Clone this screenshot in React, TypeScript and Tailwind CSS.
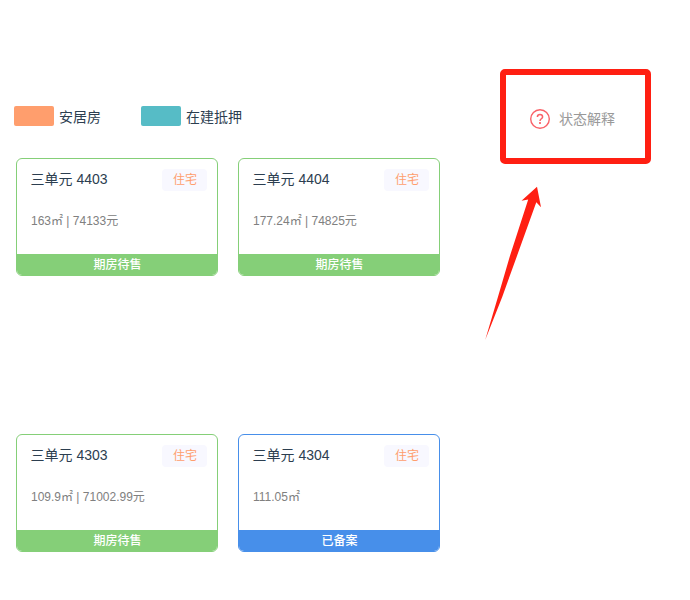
type Unit = {
  name: string;
  detail: string;
  status: string;
  tone: 'green' | 'blue';
};

const tones = {
  green: { border: 'border-[#85cf78]', bar: 'bg-[#85cf78]' },
  blue: { border: 'border-[#478fea]', bar: 'bg-[#478fea]' },
};

const floors: Unit[][] = [
  [
    { name: '三单元 4403', detail: '163㎡ | 74133元', status: '期房待售', tone: 'green' },
    { name: '三单元 4404', detail: '177.24㎡ | 74825元', status: '期房待售', tone: 'green' },
  ],
  [
    { name: '三单元 4303', detail: '109.9㎡ | 71002.99元', status: '期房待售', tone: 'green' },
    { name: '三单元 4304', detail: '111.05㎡', status: '已备案', tone: 'blue' },
  ],
];

function UnitCard({ unit }: { unit: Unit }) {
  const tone = tones[unit.tone];
  return (
    <article className={`flex h-[118px] w-[202px] flex-col overflow-hidden rounded-md border ${tone.border}`}>
      <div className="flex items-start justify-between pt-2.5 pr-2.5 pl-[13.5px]">
        <h3 className="text-sm leading-[21px] text-[#2c3e50]">{unit.name}</h3>
        <span className="h-[22px] w-[45px] rounded bg-[#f8f8ff] pl-px text-center text-xs leading-[23px] text-[#ff9e6d]">
          住宅
        </span>
      </div>
      <p className="mt-[21px] pl-3.5 text-xs leading-[18px] whitespace-nowrap text-[#808080]">{unit.detail}</p>
      <div className={`mt-auto h-[21px] pl-px text-center text-xs leading-[23px] font-medium text-white ${tone.bar}`}>
        {unit.status}
      </div>
    </article>
  );
}

function Legend({ color, label }: { color: string; label: string }) {
  return (
    <div className="flex h-5 items-center gap-[5px]">
      <span className={`h-5 w-10 rounded-xs ${color}`} />
      <span className="pt-0.5 text-sm leading-5 text-[#2c3e50]">{label}</span>
    </div>
  );
}

export default function App() {
  return (
    <main className="flex h-[600px] w-[690px] overflow-hidden bg-white font-['Liberation_Sans','Noto_Sans_CJK_SC',sans-serif]">
      <section className="w-[485px] pt-[106px]">
        <div className="flex gap-10 pl-3.5">
          <Legend color="bg-[#ff9e6d]" label="安居房" />
          <Legend color="bg-[#56bcc6]" label="在建抵押" />
        </div>
        <div className="mt-8 flex flex-col gap-[158px] pl-4">
          {floors.map((units) => (
            <div key={units[0].name} className="flex gap-5">
              {units.map((unit) => (
                <UnitCard key={unit.name} unit={unit} />
              ))}
            </div>
          ))}
        </div>
      </section>
      <aside className="pt-[69px]">
        <div className="ml-[15px] flex h-[95px] w-[151px] items-center rounded-[5px] border-6 border-[#ff1f12] pt-1 pl-6">
          <svg width="20" height="20" viewBox="0 0 20 20" fill="none" stroke="#f96268">
            <circle cx="10" cy="10" r="9.3" strokeWidth="1.4" />
            <path d="M7.4 8.1C7.4 6.5 8.5 5.6 10 5.6S12.6 6.5 12.6 7.9C12.6 9.8 10 9.8 10 12" strokeWidth="1.5" />
            <path d="M10 13.1V14.9" strokeWidth="1.7" />
          </svg>
          <span className="ml-[9px] text-sm leading-5 text-[#999]">状态解释</span>
        </div>
        <svg className="mt-[22px]" width="60" height="156" viewBox="0 0 60 156">
          <path
            d="M52 0.7L56 21.2L51.3 16.2L31.7 70.7L17.3 110.7L0.2 154L13 110.7L24.7 70.7L43.2 13.6L36.5 14.7Z"
            fill="#ff1f12"
          />
        </svg>
      </aside>
    </main>
  );
}
